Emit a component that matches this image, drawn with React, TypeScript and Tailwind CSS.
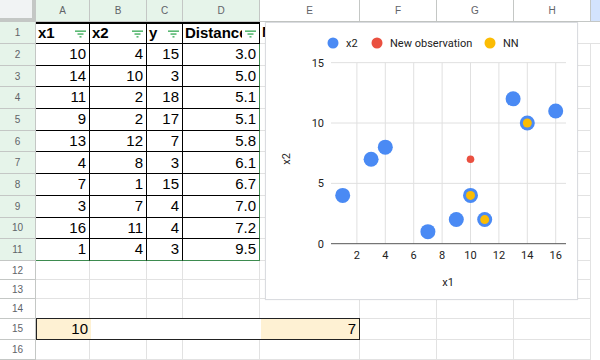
const cols = [
  { key: "A", w: 54 },
  { key: "B", w: 57 },
  { key: "C", w: 36 },
  { key: "D", w: 77 },
  { key: "E", w: 100 },
  { key: "F", w: 77 },
  { key: "G", w: 77 },
  { key: "H", w: 77 },
];

const data = [
  [10, 4, 15, "3.0"],
  [14, 10, 3, "5.0"],
  [11, 2, 18, "5.1"],
  [9, 2, 17, "5.1"],
  [13, 12, 7, "5.8"],
  [4, 8, 3, "6.1"],
  [7, 1, 15, "6.7"],
  [3, 7, 4, "7.0"],
  [16, 11, 4, "7.2"],
  [1, 4, 3, "9.5"],
];

const points = [
  [10, 4], [14, 10], [11, 2], [9, 2], [13, 12], [4, 8], [7, 1], [3, 7], [16, 11], [1, 4],
];
const nn = [[10, 4], [14, 10], [11, 2]];

const px = (v: number) => 62.5 + 14.2 * v;
const py = (v: number) => 220.7 - 12.07 * v;

const FilterIcon = () => (
  <svg width="11" height="8" viewBox="0 0 11 8" className="shrink-0">
    <rect x="0" y="0.5" width="11" height="1.3" fill="#34a853" />
    <rect x="2.5" y="3.4" width="6" height="1.3" fill="#34a853" />
    <rect x="4.5" y="6.2" width="2" height="1.3" fill="#34a853" />
  </svg>
);

const HeaderCell = ({ label, w }: { label: string; w: number }) => (
  <div
    className="relative flex items-center h-full border-r border-b border-black border-t-2 border-t-black bg-white font-bold text-[15px] text-black overflow-hidden"
    style={{ width: w }}
  >
    <span className="pl-[2px] whitespace-nowrap">{label}</span>
    <div className="absolute right-0 top-0 h-full w-[17px] flex items-center justify-center bg-white">
      <FilterIcon />
    </div>
  </div>
);

const Chart = () => (
  <div className="absolute left-[265px] top-[22px] w-[313px] h-[278px] bg-white border border-[#dadce0] shadow-[0_0_1px_rgba(0,0,0,0.1)]">
    <svg width="313" height="278" className="block" style={{ fontFamily: "Roboto, 'Liberation Sans', sans-serif" }}>
      {/* legend */}
      <circle cx="67" cy="20" r="5.5" fill="#4a8af4" />
      <text x="80" y="24" fontSize="11" fill="#222">x2</text>
      <circle cx="111" cy="20" r="5.5" fill="#ea5040" />
      <text x="124" y="24" fontSize="11" fill="#222">New observation</text>
      <circle cx="224" cy="20" r="5.5" fill="#fbbc04" />
      <text x="237" y="24" fontSize="11" fill="#222">NN</text>

      {/* grid */}
      {[5, 10, 15].map((v) => (
        <line key={v} x1="65" x2="300" y1={py(v)} y2={py(v)} stroke="#e0e0e0" strokeWidth="1" />
      ))}
      {[2, 4, 6, 8, 10, 12, 14, 16].map((v) => (
        <line key={v} x1={px(v)} x2={px(v)} y1={py(15)} y2={py(0)} stroke="#e0e0e0" strokeWidth="1" />
      ))}
      <line x1="65" x2="300" y1={py(0)} y2={py(0)} stroke="#555" strokeWidth="1" />

      {/* y labels */}
      {[0, 5, 10, 15].map((v) => (
        <text key={v} x="58" y={py(v) + 4} fontSize="11" fill="#222" textAnchor="end">{v}</text>
      ))}
      {/* x labels */}
      {[2, 4, 6, 8, 10, 12, 14, 16].map((v) => (
        <text key={v} x={px(v)} y={py(0) + 15} fontSize="11" fill="#222" textAnchor="middle">{v}</text>
      ))}
      <text x="182" y="263" fontSize="11" fill="#222" textAnchor="middle">x1</text>
      <text x="0" y="0" fontSize="11" fill="#222" textAnchor="middle" transform="translate(24,136) rotate(-90)">x2</text>

      {/* points */}
      {points.map(([x, y], i) => (
        <circle key={i} cx={px(x)} cy={py(y)} r="7.5" fill="#4a8af4" />
      ))}
      {nn.map(([x, y], i) => (
        <circle key={i} cx={px(x)} cy={py(y)} r="4.5" fill="#fbbc04" />
      ))}
      <circle cx={px(10)} cy={py(7)} r="3.8" fill="#ea5040" />
    </svg>
  </div>
);

const RowHead = ({ n, active, h }: { n: number; active?: boolean; h: string }) => (
  <div
    className={`w-[36px] shrink-0 flex items-center justify-center border-r border-b border-[#c4c7c5] text-[10px] text-[#5f6368] ${active ? "bg-[#e6f4ea]" : "bg-white"} ${h}`}
  >
    {n}
  </div>
);

export default function App() {
  return (
    <div className="relative w-[600px] h-[360px] overflow-hidden bg-white" style={{ fontFamily: "'Liberation Sans', Arial, sans-serif" }}>
      {/* column headers */}
      <div className="flex h-[22px]">
        <div className="w-[36px] shrink-0 bg-[#f1f3f4] border-r-4 border-b-4 border-[#c4c7c5]" />
        {cols.map((c, i) => (
          <div
            key={c.key}
            className={`flex items-center justify-center border-r border-b border-[#c4c7c5] text-[10px] text-[#5f6368] ${i < 4 ? "bg-[#e6f4ea]" : "bg-white"}`}
            style={{ width: c.w }}
          >
            {c.key}
          </div>
        ))}
        <div className="flex-1 bg-[#d3e3fd] border-b border-[#c4c7c5]" />
      </div>

      {/* row 1 */}
      <div className="flex h-[22px]">
        <RowHead n={1} active h="h-[22px]" />
        <HeaderCell label="x1" w={54} />
        <HeaderCell label="x2" w={57} />
        <HeaderCell label="y" w={36} />
        <HeaderCell label="Distance" w={77} />
        <div className="w-[100px] border-r border-b border-[#e2e2e2] font-bold text-[15px] pl-[2px] flex items-center">Neighbor</div>
        <div className="flex-1 border-b border-[#e2e2e2]" />
      </div>

      {/* rows 2-11 */}
      {data.map((r, ri) => (
        <div key={ri} className="flex h-[21.7px]">
          <RowHead n={ri + 2} active h="h-[21.7px]" />
          {r.map((v, ci) => (
            <div
              key={ci}
              className={`flex items-center justify-end pr-[3px] text-[15px] text-black bg-white border-r ${ci === 3 ? "border-r-[#3d8b4f]" : "border-r-black"} ${ri === 9 ? "border-b border-b-[#3d8b4f]" : "border-b border-b-black"}`}
              style={{ width: cols[ci].w }}
            >
              {v}
            </div>
          ))}
          {cols.slice(4).map((c) => (
            <div key={c.key} className="border-r border-b border-[#e2e2e2]" style={{ width: c.w }} />
          ))}
        </div>
      ))}

      {/* rows 12-16 */}
      {[12, 13, 14, 15, 16].map((n) => {
        const h = n === 15 ? "h-[21px]" : n === 16 ? "h-[20px]" : "h-[19.3px]";
        return (
          <div key={n} className={`flex ${h}`}>
            <RowHead n={n} h={h} />
            {n === 15 ? (
              <div className="flex w-[324px] border border-[#222] -mt-px">
                <div className="w-[54px] bg-[#fef1d3] flex items-center justify-end pr-[3px] text-[15px]">10</div>
                <div className="w-[170px] bg-white" />
                <div className="flex-1 bg-[#fef1d3] flex items-center justify-end pr-[3px] text-[15px]">7</div>
              </div>
            ) : (
              cols.slice(0, 5).map((c) => (
                <div key={c.key} className="border-r border-b border-[#e2e2e2]" style={{ width: c.w }} />
              ))
            )}
            {cols.slice(5).map((c) => (
              <div key={c.key} className="border-r border-b border-[#e2e2e2]" style={{ width: c.w }} />
            ))}
          </div>
        );
      })}

      <Chart />
    </div>
  );
}
